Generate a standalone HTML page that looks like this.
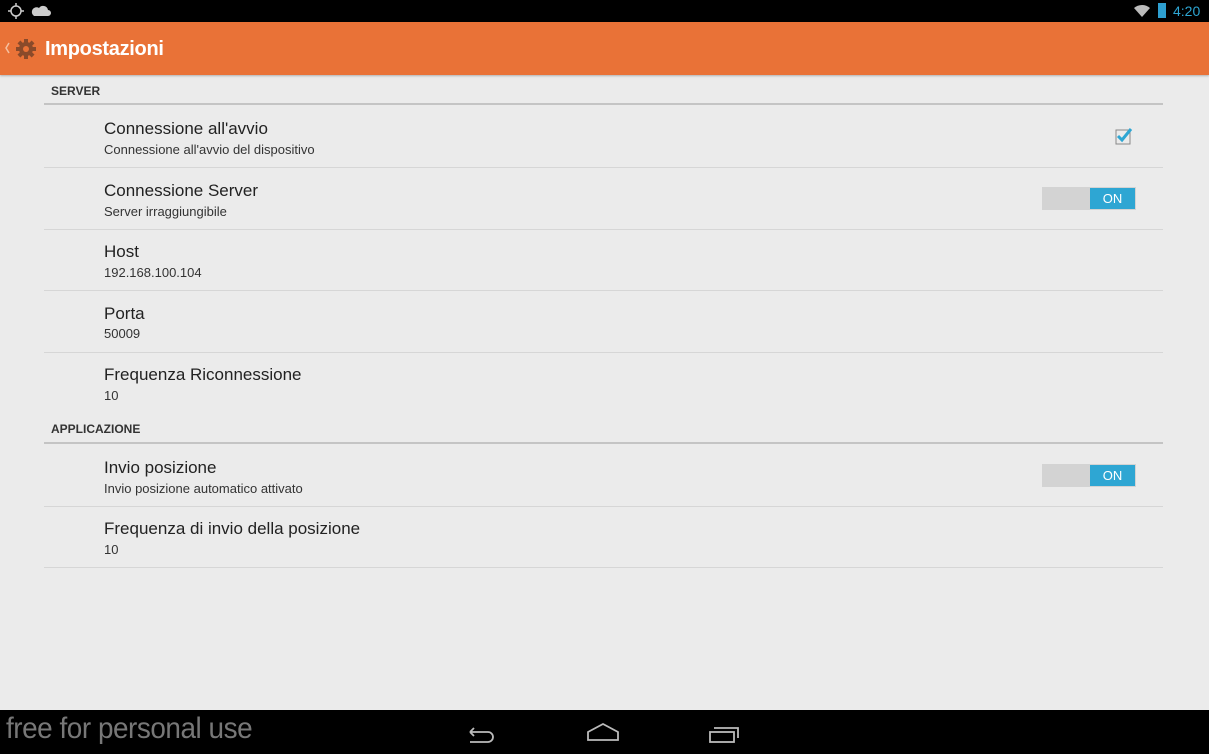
<!DOCTYPE html>
<html><head><meta charset="utf-8"><style>
*{margin:0;padding:0;box-sizing:border-box}
body{width:1209px;height:754px;background:#ebebeb;font-family:"Liberation Sans",sans-serif;position:relative;overflow:hidden}
.sb{position:absolute;left:0;top:0;width:1209px;height:22px;background:#000}
.ab{position:absolute;left:0;top:22px;width:1209px;height:53px;background:#e97237;box-shadow:0 1px 2px rgba(0,0,0,.25)}
.ab .t{position:absolute;left:45px;top:16px;color:#fff;font-size:20px;font-weight:bold;letter-spacing:-0.3px}
.hdr{position:absolute;left:51px;font-size:12px;font-weight:bold;color:#333}
.hl{position:absolute;left:44px;width:1119px;height:2px;background:#c4c4c4}
.rl{position:absolute;left:44px;width:1119px;height:1px;background:#d6d6d6}
.ti{position:absolute;left:104px;font-size:17px;color:#222}
.su{position:absolute;left:104px;font-size:13px;color:#333}
.tg{position:absolute;left:1042px;width:94px;height:23px;background:#d3d3d3}
.tg div{position:absolute;right:1px;top:1px;width:45px;height:21px;background:#2ea6d3;color:#fff;font-size:13px;text-align:center;line-height:21px}
.nb{position:absolute;left:0;top:710px;width:1209px;height:44px;background:#000}
</style></head><body>
<div class="sb">
<svg width="60" height="22" style="position:absolute;left:0;top:0"><circle cx="16" cy="11" r="5" fill="none" stroke="#ccc" stroke-width="1.5"/><path d="M16 3v3M16 16v3M8 11h3M21 11h3" stroke="#ccc" stroke-width="1.5"/><path d="M34 16h14a3 3 0 0 0 0-6a5 5 0 0 0-9-2a4 4 0 0 0-5 8z" fill="#ccc"/></svg>
<svg width="40" height="22" style="position:absolute;left:1130px;top:0"><path d="M4 8a12 12 0 0 1 16 0L12 17z" fill="#bbb"/><rect x="28" y="3" width="8" height="15" fill="#2e9fd0"/></svg>
<div style="position:absolute;left:1173px;top:3px;color:#2ea6d3;font-size:14px">4:20</div>
</div>
<div class="ab">
<svg width="45" height="53" style="position:absolute;left:0;top:0"><path d="M9 21l-3 5 3 5" stroke="#f5c0a0" stroke-width="1.5" fill="none"/><g transform="translate(26,27)" fill="#8a4a2a"><circle r="7"/><rect x="-2" y="-10" width="4" height="20"/><rect x="-10" y="-2" width="20" height="4"/><rect x="-2" y="-10" width="4" height="20" transform="rotate(45)"/><rect x="-2" y="-10" width="4" height="20" transform="rotate(-45)"/><circle r="3" fill="#e97237"/></g></svg>
<div class="t">Impostazioni</div>
</div>
<div class="hdr" style="top:84px">SERVER</div><div class="hl" style="top:103px"></div>
<div class="ti" style="top:119px">Connessione all'avvio</div><div class="su" style="top:142px">Connessione all'avvio del dispositivo</div>
<svg width="22" height="22" style="position:absolute;left:1113px;top:126px"><rect x="3" y="4" width="14" height="14" fill="none" stroke="#888" stroke-width="1"/><path d="M5 10l4 4 9-11" stroke="#2ea6d3" stroke-width="3" fill="none"/></svg>
<div class="rl" style="top:167px"></div>
<div class="ti" style="top:181px">Connessione Server</div><div class="su" style="top:204px">Server irraggiungibile</div>
<div class="tg" style="top:187px"><div>ON</div></div>
<div class="rl" style="top:229px"></div>
<div class="ti" style="top:242px">Host</div><div class="su" style="top:265px">192.168.100.104</div>
<div class="rl" style="top:290px"></div>
<div class="ti" style="top:304px">Porta</div><div class="su" style="top:326px">50009</div>
<div class="rl" style="top:352px"></div>
<div class="ti" style="top:365px">Frequenza Riconnessione</div><div class="su" style="top:388px">10</div>
<div class="hdr" style="top:422px">APPLICAZIONE</div><div class="hl" style="top:442px"></div>
<div class="ti" style="top:458px">Invio posizione</div><div class="su" style="top:481px">Invio posizione automatico attivato</div>
<div class="tg" style="top:464px"><div>ON</div></div>
<div class="rl" style="top:506px"></div>
<div class="ti" style="top:519px">Frequenza di invio della posizione</div><div class="su" style="top:542px">10</div>
<div class="rl" style="top:567px"></div>
<div class="nb">
<div style="position:absolute;left:6px;top:2px;color:#777;font-size:30px;letter-spacing:-0.5px;transform:scaleX(.93);transform-origin:left">free for personal use</div>
<svg width="320" height="44" style="position:absolute;left:460px;top:0"><path d="M10 22h18a5 5 0 0 1 0 10h-18M10 22l4-4M10 22l4 4" stroke="#bbb" stroke-width="1.8" fill="none"/><path d="M128 30v-8l15-8 15 8v8z" stroke="#bbb" stroke-width="1.8" fill="none"/><rect x="250" y="22" width="24" height="10" stroke="#bbb" stroke-width="1.8" fill="none"/><path d="M254 18h24v10" stroke="#bbb" stroke-width="1.8" fill="none"/></svg>
</div>
</body></html>
